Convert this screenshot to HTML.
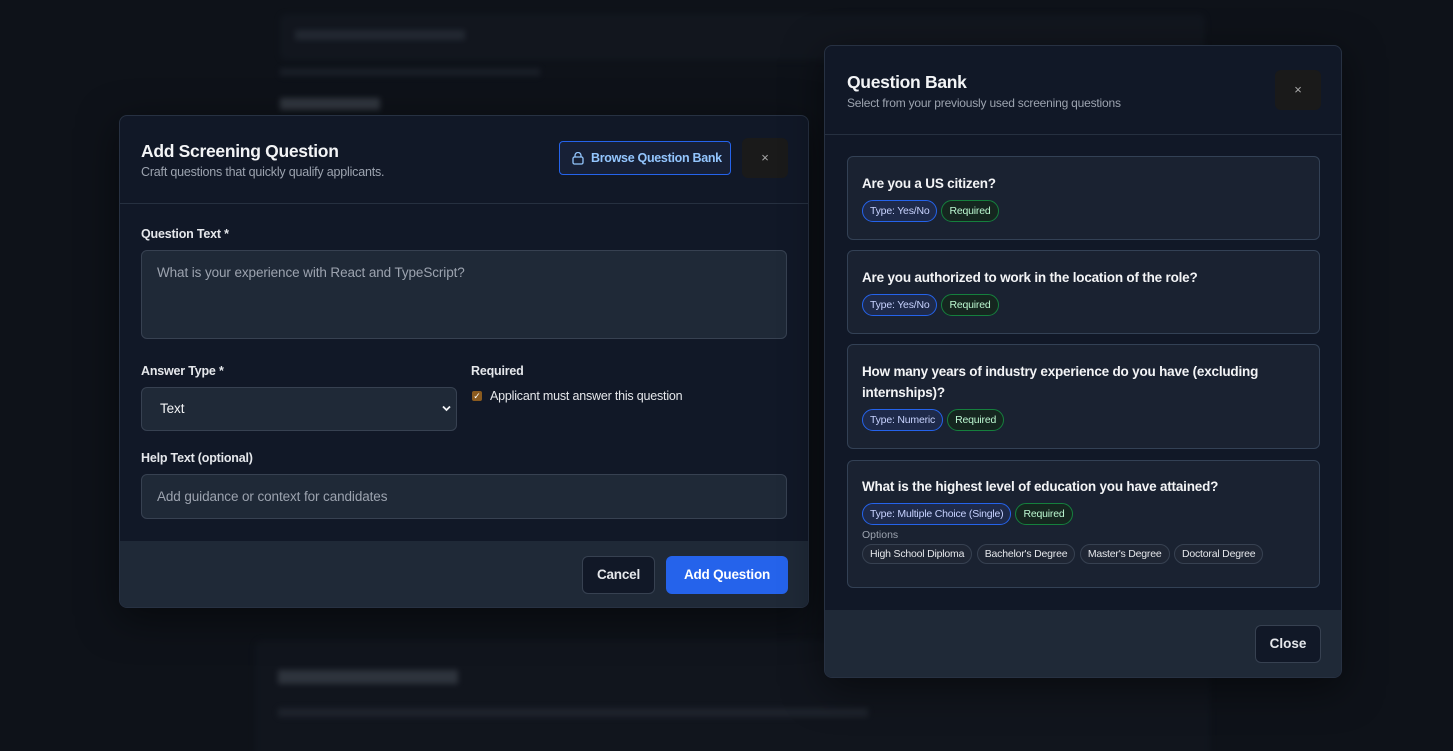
<!DOCTYPE html>
<html><head><meta charset="utf-8"><style>
*{box-sizing:border-box;margin:0;padding:0}
html,body{width:1453px;height:751px;overflow:hidden}
body{background:#0e1219;font-family:"Liberation Sans",sans-serif;position:relative;color:#f3f4f6}
.bg{position:absolute;filter:blur(3px);opacity:.5}
.m{position:absolute;border:1px solid #273142;border-radius:8px;overflow:hidden;box-shadow:0 10px 40px rgba(0,0,0,.5)}
.lbl{font-size:12.5px;font-weight:bold;color:#e5e7eb;position:absolute;letter-spacing:-.2px}
.inp{position:absolute;background:#1f2937;border:1px solid #374151;border-radius:6px;color:#9ca3af;font-size:13.5px;letter-spacing:-.1px}
.card{position:absolute;left:22px;width:473px;background:#1a2231;border:1px solid #334155;border-radius:6px;padding:0 14px}
.card h4{font-size:13.5px;font-weight:bold;color:#f3f4f6;line-height:21px;letter-spacing:-.2px}
.pill{display:inline-block;font-size:10.5px;height:22px;line-height:20px;padding:0 7px;border-radius:11px;margin-right:4px;letter-spacing:-.2px;white-space:nowrap}
.t{background:#1e2a4a;border:1px solid #2563eb;color:#c7d2fe}
.r{background:#15261f;border:1px solid #15803d;color:#bbf7d0}
.o{background:#1f2634;border:1px solid #374151;color:#e5e7eb;height:20px;line-height:18px;padding:0 7px;margin-right:0}
</style></head><body>
<div class="bg" style="left:280px;top:14px;width:925px;height:46px;background:#161b24;border-radius:6px"></div>
<div class="bg" style="left:295px;top:30px;width:170px;height:10px;background:#333a45"></div>
<div class="bg" style="left:280px;top:68px;width:260px;height:8px;background:#252b35"></div>
<div class="bg" style="left:280px;top:98px;width:100px;height:12px;background:#555c66"></div>
<div class="bg" style="left:255px;top:640px;width:955px;height:120px;background:#141922;border-radius:8px"></div>
<div class="bg" style="left:278px;top:670px;width:180px;height:14px;background:#4b525c"></div>
<div class="bg" style="left:278px;top:708px;width:590px;height:9px;background:#2b313b"></div>

<div class="m" style="left:119px;top:115px;width:690px;height:493px;background:#111827">
 <div style="position:absolute;left:21px;top:25px;font-size:17.5px;font-weight:bold;letter-spacing:-.3px">Add Screening Question</div>
 <div style="position:absolute;left:21px;top:49px;font-size:12.5px;color:#9ca3af;letter-spacing:-.2px">Craft questions that quickly qualify applicants.</div>
 <div style="position:absolute;left:439px;top:25px;width:172px;height:34px;border:1px solid #2563eb;border-radius:4px;background:#172036;color:#93c5fd;font-size:12.5px;font-weight:bold;line-height:32px;padding-left:31px;white-space:nowrap;letter-spacing:-.3px">Browse Question Bank
  <svg style="position:absolute;left:12px;top:10px" width="12" height="13" viewBox="0 0 12 13" fill="none" stroke="#93c5fd" stroke-width="1.3"><rect x="1" y="5" width="10" height="7" rx="1.5"/><path d="M3 5V3.5a3 3 0 0 1 6 0V5"/></svg></div>
 <div style="position:absolute;left:622px;top:22px;width:46px;height:40px;background:#1a1a1a;border-radius:6px;color:#aaa;text-align:center;line-height:40px;font-size:13px">×</div>
 <div style="position:absolute;left:0;top:87px;width:100%;border-top:1px solid #263040"></div>
 <div class="lbl" style="left:21px;top:111px">Question Text *</div>
 <div class="inp" style="left:21px;top:134px;width:646px;height:89px;padding:14px 15px">What is your experience with React and TypeScript?</div>
 <div class="lbl" style="left:21px;top:248px">Answer Type *</div>
 <div class="inp" style="left:21px;top:271px;width:316px;height:44px;padding:13px 18px;color:#f3f4f6">Text<svg style="position:absolute;right:5px;top:17px" width="9" height="7" viewBox="0 0 9 7"><path d="M1 1.5l3.5 3.5 3.5-3.5" stroke="#f3f4f6" stroke-width="1.8" fill="none"/></svg></div>
 <div class="lbl" style="left:351px;top:248px">Required</div>
 <div style="position:absolute;left:352px;top:275px;width:10px;height:10px;background:#8a5a1e;border-radius:2px;color:#fff;font-size:9px;line-height:10px;text-align:center">✓</div>
 <div style="position:absolute;left:370px;top:273px;font-size:12.5px;color:#e5e7eb;letter-spacing:-.2px">Applicant must answer this question</div>
 <div class="lbl" style="left:21px;top:335px">Help Text (optional)</div>
 <div class="inp" style="left:21px;top:358px;width:646px;height:45px;padding:14px 15px">Add guidance or context for candidates</div>
 <div style="position:absolute;left:0;top:425px;width:100%;height:70px;background:#1f2937"></div>
 <div style="position:absolute;left:462px;top:440px;width:73px;height:38px;border:1px solid #374151;border-radius:6px;background:#111827;font-size:13.5px;font-weight:bold;text-align:center;line-height:36px;color:#e5e7eb;letter-spacing:-.2px">Cancel</div>
 <div style="position:absolute;left:546px;top:440px;width:122px;height:38px;border-radius:6px;background:#2563eb;font-size:13.5px;font-weight:bold;text-align:center;line-height:38px;color:#fff;letter-spacing:-.2px">Add Question</div>
</div>

<div class="m" style="left:824px;top:45px;width:518px;height:633px;background:#111827">
 <div style="position:absolute;left:22px;top:26px;font-size:17.5px;font-weight:bold;letter-spacing:-.3px">Question Bank</div>
 <div style="position:absolute;left:22px;top:50px;font-size:12px;color:#9ca3af;letter-spacing:-.2px">Select from your previously used screening questions</div>
 <div style="position:absolute;left:450px;top:24px;width:46px;height:40px;background:#1a1a1a;border-radius:6px;color:#aaa;text-align:center;line-height:40px;font-size:13px">×</div>
 <div style="position:absolute;left:0;top:88px;width:100%;border-top:1px solid #263040"></div>
 <div class="card" style="top:110px;height:84px;padding-top:16px"><h4>Are you a US citizen?</h4><div style="margin-top:6px"><span class="pill t">Type: Yes/No</span><span class="pill r">Required</span></div></div>
 <div class="card" style="top:204px;height:84px;padding-top:16px"><h4>Are you authorized to work in the location of the role?</h4><div style="margin-top:6px"><span class="pill t">Type: Yes/No</span><span class="pill r">Required</span></div></div>
 <div class="card" style="top:298px;height:105px;padding-top:16px"><h4>How many years of industry experience do you have (excluding internships)?</h4><div style="margin-top:6px"><span class="pill t">Type: Numeric</span><span class="pill r">Required</span></div></div>
 <div class="card" style="top:414px;height:128px;padding-top:15px"><h4>What is the highest level of education you have attained?</h4><div style="margin-top:6px"><span class="pill t">Type: Multiple Choice (Single)</span><span class="pill r">Required</span></div>
  <div style="font-size:10.5px;color:#9ca3af;margin-top:4px">Options</div>
  <div style="margin-top:3px;white-space:nowrap"><span class="pill o">High School Diploma</span> <span class="pill o">Bachelor's Degree</span> <span class="pill o">Master's Degree</span> <span class="pill o">Doctoral Degree</span></div></div>
 <div style="position:absolute;left:0;top:564px;width:100%;height:70px;background:#1f2937"></div>
 <div style="position:absolute;left:430px;top:579px;width:66px;height:38px;border:1px solid #374151;border-radius:6px;background:#111827;font-size:13.5px;font-weight:bold;text-align:center;line-height:36px;color:#e5e7eb">Close</div>
</div>
</body></html>
